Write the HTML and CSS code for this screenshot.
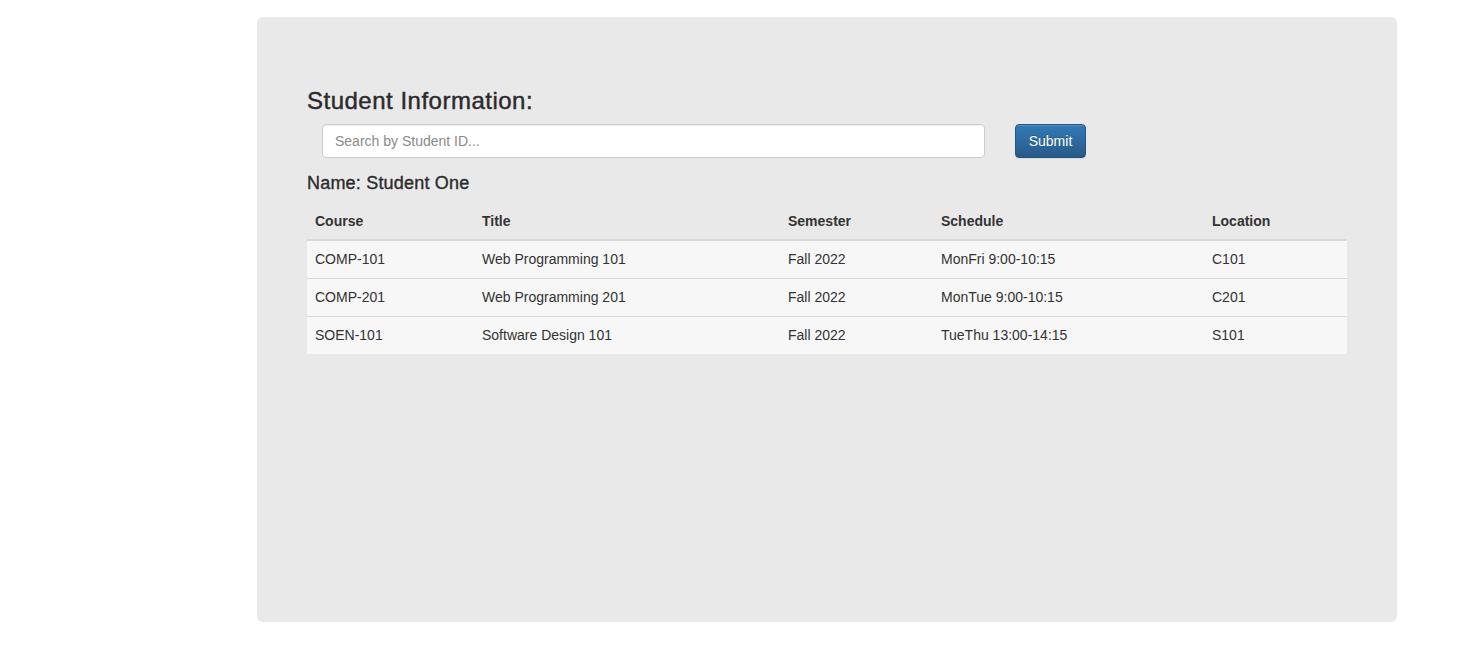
FILE: index.html
```html
<!DOCTYPE html>
<html>
<head>
<meta charset="utf-8">
<link rel="stylesheet" href="styles.css">
</head>
<body>
<div class="container">
  <div class="jumbotron">
    <h3 class="title">Student Information:</h3>
    <form class="search">
      <input class="search-input" type="text" placeholder="Search by Student ID...">
      <button class="btn-primary" type="button">Submit</button>
    </form>
    <h4 class="name">Name: Student One</h4>
    <table class="table">
      <thead>
        <tr>
          <th class="c1">Course</th>
          <th class="c2">Title</th>
          <th class="c3">Semester</th>
          <th class="c4">Schedule</th>
          <th class="c5">Location</th>
        </tr>
      </thead>
      <tbody>
        <tr><td>COMP-101</td><td>Web Programming 101</td><td>Fall 2022</td><td>MonFri 9:00-10:15</td><td>C101</td></tr>
        <tr><td>COMP-201</td><td>Web Programming 201</td><td>Fall 2022</td><td>MonTue 9:00-10:15</td><td>C201</td></tr>
        <tr><td>SOEN-101</td><td>Software Design 101</td><td>Fall 2022</td><td>TueThu 13:00-14:15</td><td>S101</td></tr>
      </tbody>
    </table>
  </div>
</div>
</body>
</html>
```

FILE: styles.css
```css
* { box-sizing: border-box; }
html, body { margin: 0; padding: 0; background: #fff; }
body {
  font-family: "Liberation Sans", Arial, Helvetica, sans-serif;
  font-size: 14px;
  line-height: 1.42857;
  color: #333;
}
.container {
  width: 1170px;
  margin: 0 0 0 242px;
  padding: 17px 15px 0;
}
.jumbotron {
  background: #e9e9e9;
  border-radius: 6px;
  height: 605px;
  padding: 71px 50px 0;
}
.title {
  margin: 0;
  font-size: 24px;
  font-weight: 500;
  line-height: 1.1;
  height: 26px;
  color: #2b2b2b;
  letter-spacing: 0.5px;
  -webkit-text-stroke: 0.45px #2b2b2b;
}
.search {
  display: flex;
  align-items: center;
  gap: 30px;
  margin: 10px 0 0 15px;
}
.search-input {
  width: 663px;
  height: 34px;
  padding: 6px 12px;
  font-family: inherit;
  font-size: 14px;
  color: #555;
  background: #fff;
  border: 1px solid #ccc;
  border-radius: 4px;
  box-shadow: inset 0 1px 1px rgba(0,0,0,.075);
  outline: none;
}
.search-input::placeholder { color: #8a8a8a; }
.btn-primary {
  width: 71px;
  height: 34px;
  padding: 0;
  font-family: inherit;
  font-size: 14px;
  color: #fff;
  background-image: linear-gradient(to bottom, #337ab7 0, #265a88 100%);
  border: 1px solid #245580;
  border-radius: 4px;
  text-shadow: 0 -1px 0 rgba(0,0,0,.2);
  box-shadow: inset 0 1px 0 rgba(255,255,255,.15), 0 1px 1px rgba(0,0,0,.075);
}
.name {
  margin: 16px 0 0;
  font-size: 18px;
  font-weight: 500;
  line-height: 1.1;
  height: 22px;
  color: #2b2b2b;
  letter-spacing: 0.2px;
  -webkit-text-stroke: 0.35px #2b2b2b;
}
.table {
  width: 1040px;
  margin-top: 11px;
  border-collapse: collapse;
  border-spacing: 0;
}
.table th, .table td {
  text-align: left;
  padding: 8px;
  line-height: 21px;
  vertical-align: top;
}
.table th {
  font-weight: bold;
  border-bottom: 2px solid #d8d8d8;
  padding-top: 4px;
  padding-bottom: 7px;
}
.table td {
  background: #f7f7f7;
  border-top: 1px solid #d8d8d8;
}
.c1 { width: 167px; }
.c2 { width: 306px; }
.c3 { width: 153px; }
.c4 { width: 271px; }
.c5 { width: 143px; }
```
